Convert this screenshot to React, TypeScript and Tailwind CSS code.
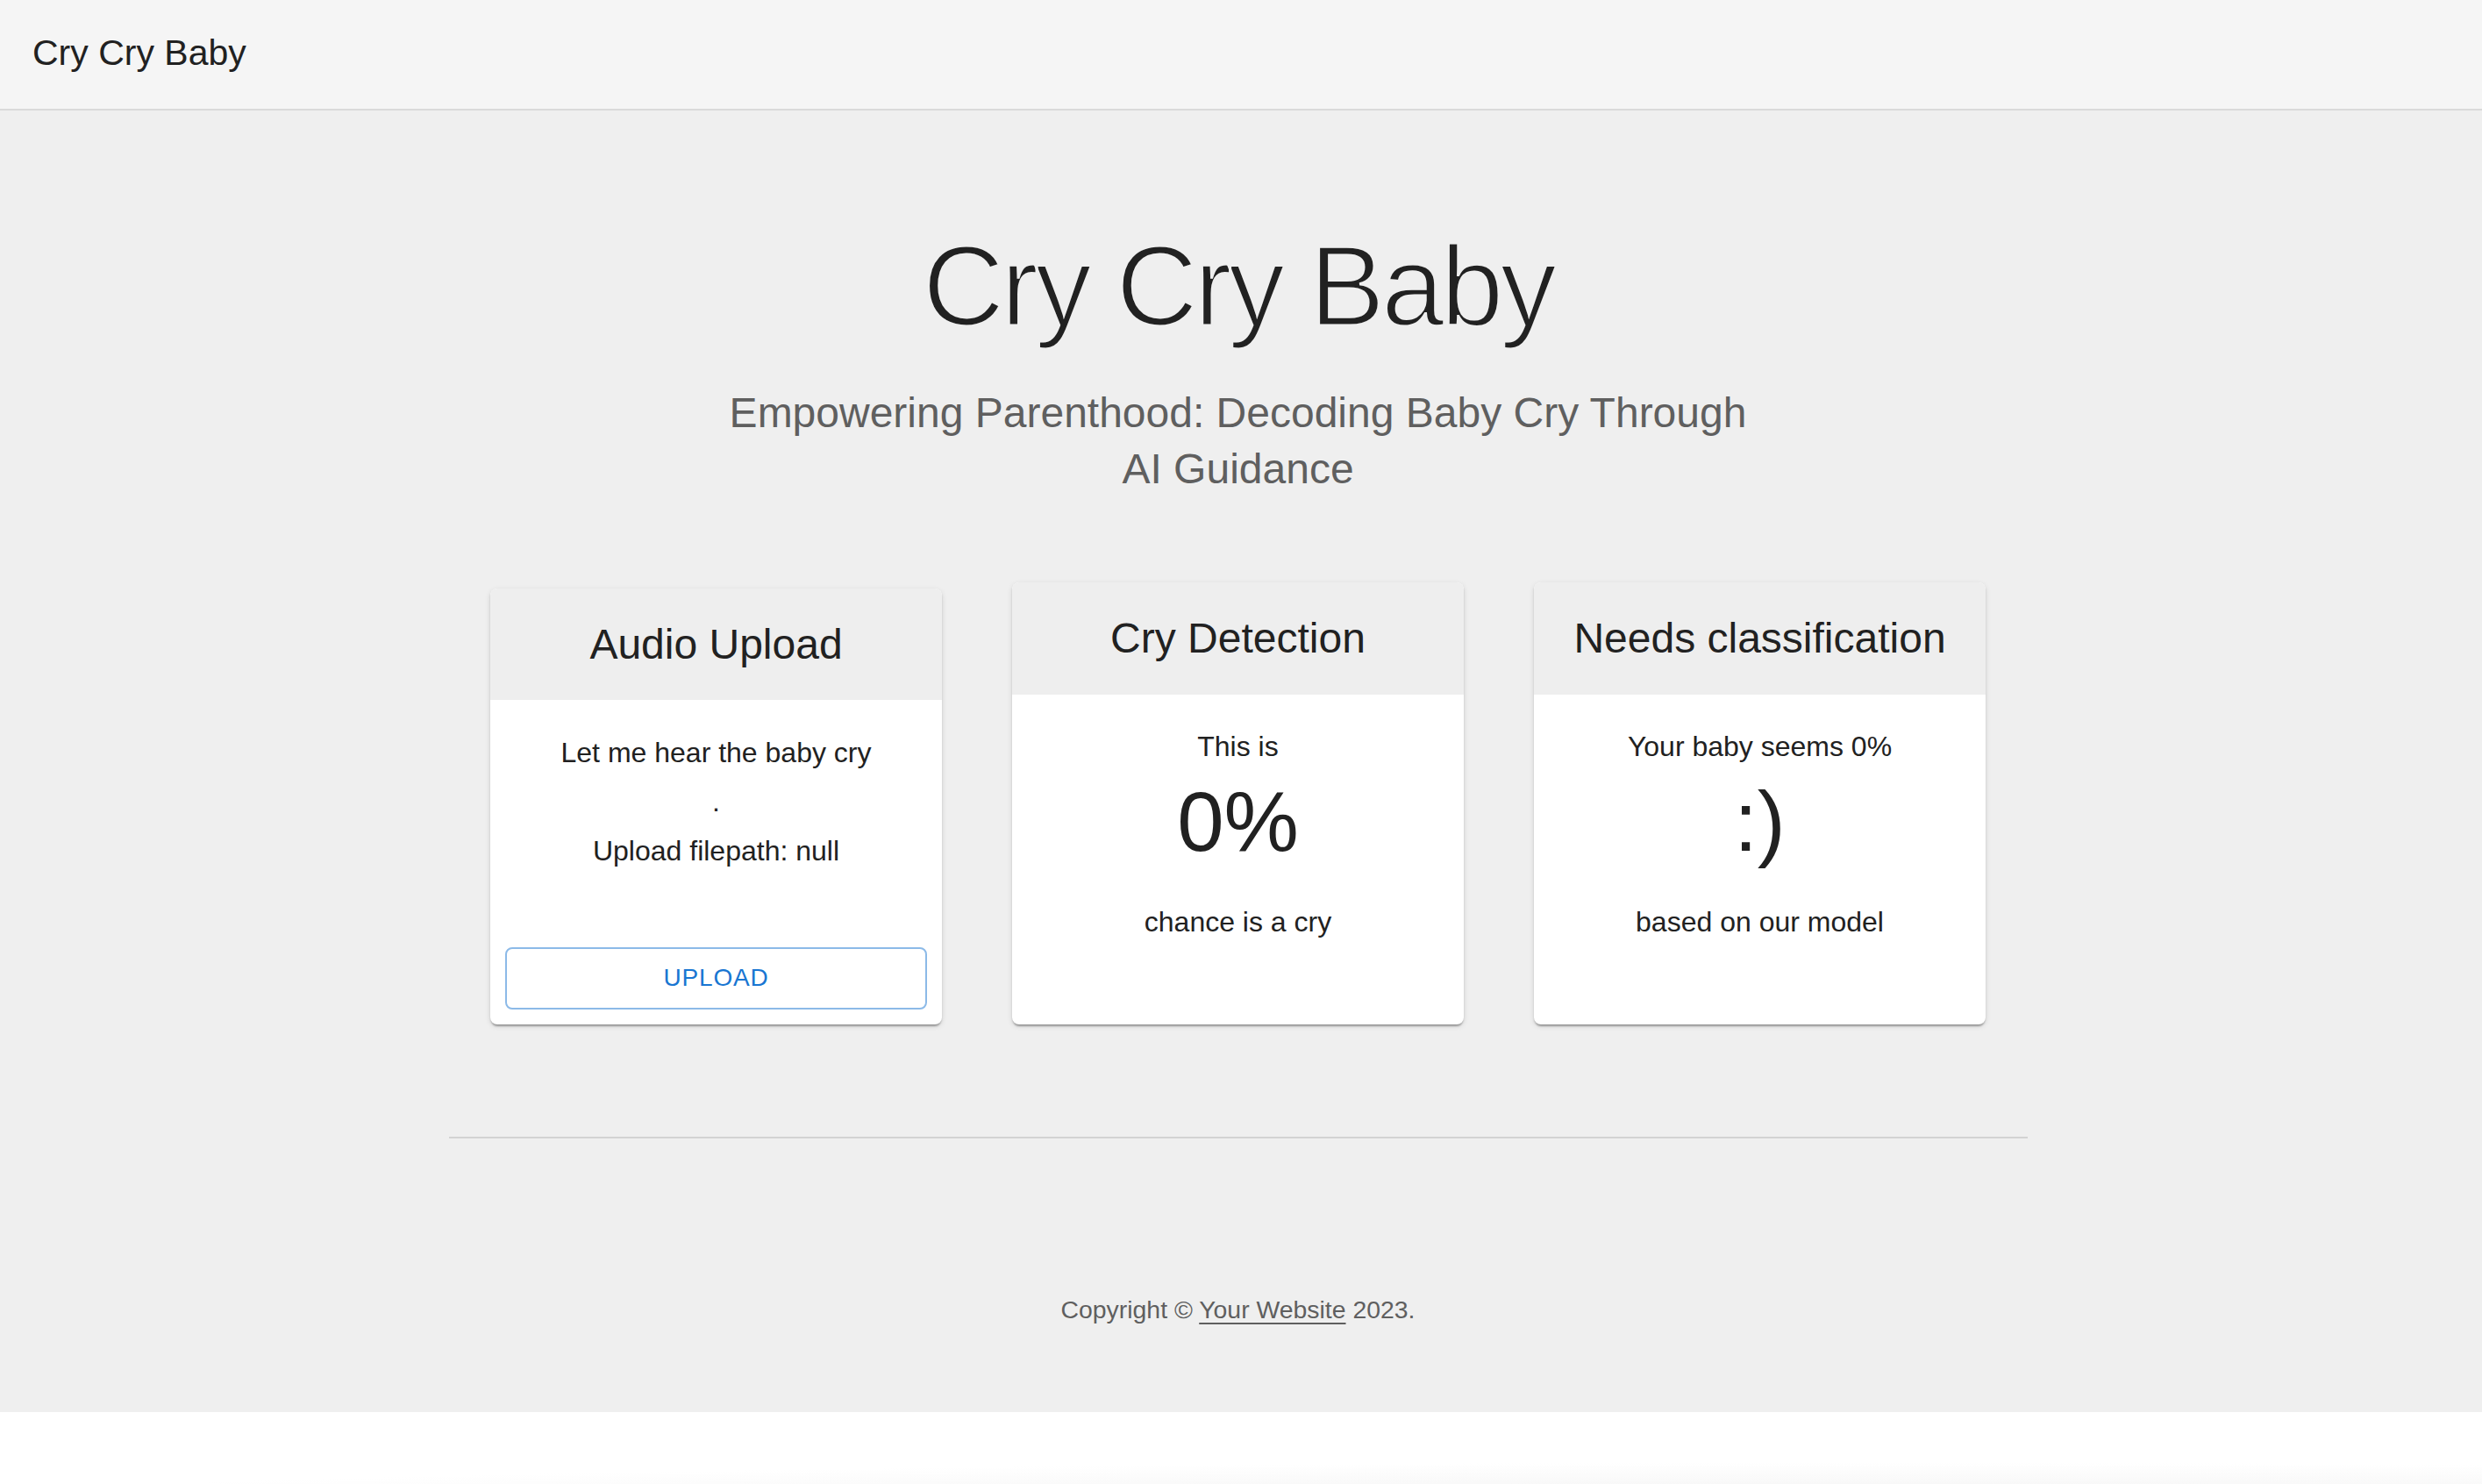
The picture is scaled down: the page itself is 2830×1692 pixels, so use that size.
import React from "react";

function CardShell({
  title,
  heightClass,
  headerClass,
  children,
}: {
  title: string;
  heightClass: string;
  headerClass: string;
  children: React.ReactNode;
}) {
  return (
    <div
      className={`${heightClass} flex flex-col overflow-hidden rounded-[8px] bg-white shadow-[0_4px_2px_-2px_rgba(0,0,0,0.2),0_2px_2px_0_rgba(0,0,0,0.14),0_2px_6px_0_rgba(0,0,0,0.12)]`}
    >
      <div className={`${headerClass} flex items-center justify-center bg-[#eeeeee]`}>
        <h2 className="text-[48px] leading-[64px] text-[#212121]">{title}</h2>
      </div>
      {children}
    </div>
  );
}

export default function App() {
  return (
    <div className="w-full font-['Liberation_Sans',Arial,Helvetica,sans-serif] text-[#212121]">
      <header className="flex h-[126px] items-center border-b-2 border-[#dadada] bg-[#f5f5f5] pb-[3px] pl-[37px]">
        <span className="text-[41px] leading-normal text-[#212121]">Cry Cry Baby</span>
      </header>

      <main className="flex flex-col items-center bg-[#efefef] pb-[97px] pr-[7px] pt-[123px]">
        <h1 className="text-[129px] leading-[154px] tracking-[-4px] text-[#212121] [-webkit-text-stroke:3px_#efefef]">
          Cry Cry Baby
        </h1>
        <p className="mt-[36px] w-[1180px] text-center text-[48px] leading-[64px] text-[#5f5f5f]">
          Empowering Parenthood: Decoding Baby Cry Through AI Guidance
        </p>

        <div className="mt-[97px] grid w-[1705px] grid-cols-3 items-end gap-[80px]">
          <CardShell title="Audio Upload" heightClass="h-[497px]" headerClass="h-[127px]">
            <div className="flex flex-1 flex-col items-center gap-[8px] pt-[36px] text-[32px] leading-[48px]">
              <p>Let me hear the baby cry</p>
              <p>.</p>
              <p>Upload filepath: null</p>
            </div>
            <div className="p-[17px]">
              <button className="flex h-[71px] w-full items-center justify-center rounded-[8px] border-2 border-[#8cbae8] bg-white pb-[2px] text-[28px] tracking-[0.8px] text-[#1976d2]">
                UPLOAD
              </button>
            </div>
          </CardShell>

          <CardShell title="Cry Detection" heightClass="h-[504px]" headerClass="h-[128px]">
            <div className="flex flex-1 flex-col items-center pt-[35px]">
              <p className="text-[32px] leading-[48px]">This is</p>
              <p className="mt-[6px] text-[96px] leading-[112px]">0%</p>
              <p className="mt-[34px] text-[32px] leading-[48px]">chance is a cry</p>
            </div>
          </CardShell>

          <CardShell title="Needs classification" heightClass="h-[504px]" headerClass="h-[128px]">
            <div className="flex flex-1 flex-col items-center pt-[35px]">
              <p className="text-[32px] leading-[48px]">Your baby seems 0%</p>
              <p className="mt-[6px] text-[96px] leading-[112px]">:)</p>
              <p className="mt-[34px] text-[32px] leading-[48px]">based on our model</p>
            </div>
          </CardShell>
        </div>

        <div className="mt-[128px] h-[2px] w-[1800px] bg-[#d3d3d3]" />

        <p className="mt-[175px] text-[28.4px] leading-[40px] text-[#5f5f5f]">
          Copyright ©{" "}
          <a href="#" className="underline decoration-2 underline-offset-[5px] text-[#5f5f5f]">
            Your Website
          </a>{" "}
          2023.
        </p>
      </main>

      <div className="h-[82px] bg-[radial-gradient(ellipse_120%_100%_at_75%_140%,#efefef_0%,#ffffff_70%)]" />
    </div>
  );
}
